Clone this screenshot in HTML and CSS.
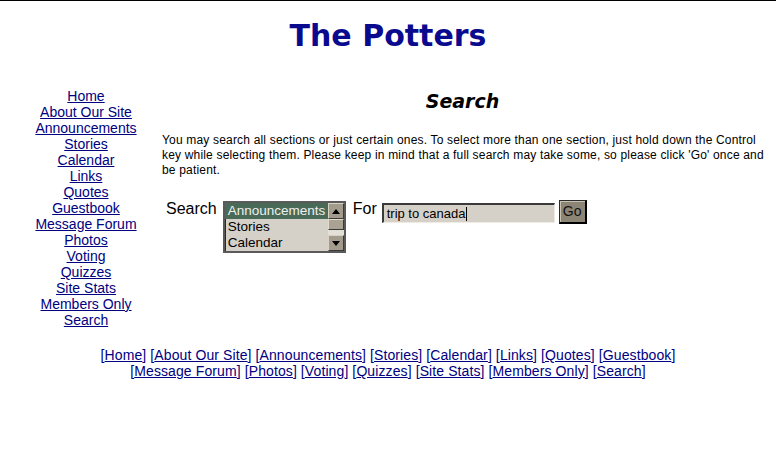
FILE: index.html
```html
<!DOCTYPE html>
<html>
<head>
<meta charset="utf-8">
<title>The Potters - Search</title>
<link rel="stylesheet" href="styles.css">
</head>
<body>
<div class="page">
  <h1 class="site-title">The Potters</h1>
  <div class="layout">
    <nav class="side-nav">
      <a href="#">Home</a>
      <a href="#">About Our Site</a>
      <a href="#">Announcements</a>
      <a href="#">Stories</a>
      <a href="#">Calendar</a>
      <a href="#">Links</a>
      <a href="#">Quotes</a>
      <a href="#">Guestbook</a>
      <a href="#">Message Forum</a>
      <a href="#">Photos</a>
      <a href="#">Voting</a>
      <a href="#">Quizzes</a>
      <a href="#">Site Stats</a>
      <a href="#">Members Only</a>
      <a href="#">Search</a>
    </nav>
    <main class="content">
      <h2 class="page-heading">Search</h2>
      <p class="intro">You may search all sections or just certain ones. To select more than one section, just hold down the Control key while selecting them. Please keep in mind that a full search may take some, so please click 'Go' once and be patient.</p>
      <form class="search-row">
        <span class="label">Search</span>
        <div class="listbox">
          <div class="options">
            <div class="option selected">Announcements</div>
            <div class="option">Stories</div>
            <div class="option">Calendar</div>
          </div>
          <div class="scrollbar">
            <div class="sb-btn"><svg width="8" height="5" viewBox="0 0 8 5"><polygon points="4,0 8,5 0,5" fill="#000"/></svg></div>
            <div class="sb-track"><div class="sb-thumb"></div></div>
            <div class="sb-btn"><svg width="8" height="5" viewBox="0 0 8 5"><polygon points="0,0 8,0 4,5" fill="#000"/></svg></div>
          </div>
        </div>
        <span class="label">For</span>
        <div class="textbox"><span>trip to canada</span><span class="caret"></span></div>
        <div class="go-btn">Go</div>
      </form>
    </main>
  </div>
  <footer class="foot-nav">
    <div class="foot-line">[<a href="#">Home</a>] [<a href="#">About Our Site</a>] [<a href="#">Announcements</a>] [<a href="#">Stories</a>] [<a href="#">Calendar</a>] [<a href="#">Links</a>] [<a href="#">Quotes</a>] [<a href="#">Guestbook</a>]</div>
    <div class="foot-line">[<a href="#">Message Forum</a>] [<a href="#">Photos</a>] [<a href="#">Voting</a>] [<a href="#">Quizzes</a>] [<a href="#">Site Stats</a>] [<a href="#">Members Only</a>] [<a href="#">Search</a>]</div>
  </footer>
</div>
</body>
</html>
```

FILE: styles.css
```css
html, body {
  margin: 0;
  padding: 0;
  background: #ffffff;
}

.page {
  border-top: 1px solid #000;
  min-height: 456px;
  font-family: "Liberation Sans", Arial, sans-serif;
  color: #000;
}

.site-title {
  margin: 17px 0 0;
  text-align: center;
  font-family: "DejaVu Sans", Verdana, sans-serif;
  font-weight: bold;
  font-size: 30px;
  line-height: 36px;
  color: #0a0a8f;
}

.layout {
  display: flex;
  margin-top: 34px;
  padding-left: 10px;
}

.side-nav {
  width: 152px;
  display: flex;
  flex-direction: column;
  align-items: center;
  font-size: 14px;
  line-height: 16px;
}

.side-nav a,
.foot-nav a {
  color: #000080;
  text-decoration: underline;
}

.content {
  width: 601px;
}

.page-heading {
  margin: 0;
  text-align: center;
  font-family: "DejaVu Sans", Verdana, sans-serif;
  font-style: italic;
  font-weight: bold;
  font-size: 19px;
  line-height: 26px;
}

.intro {
  margin: 19px -10px 0 0;
  font-size: 12px;
  line-height: 15px;
  letter-spacing: 0.18px;
}

.search-row {
  display: flex;
  align-items: flex-start;
  margin: 22px 0 0;
  padding-left: 4px;
}

.label {
  font-size: 16px;
  line-height: 18px;
}

.listbox {
  display: flex;
  width: 119px;
  height: 48px;
  margin: 1px 0 0 6px;
  border: 2px solid #5a5a5a;
  box-shadow: inset 1px 1px 0 #2a2a2a;
  background: #d6d1c8;
}

.options {
  flex: 1;
  font-size: 13.5px;
  line-height: 16px;
}

.option {
  height: 16px;
  padding-left: 3px;
  white-space: nowrap;
}

.option.selected {
  background: #4a6a58;
  color: #eef0ee;
}

.scrollbar {
  width: 16px;
  display: flex;
  flex-direction: column;
}

.sb-btn {
  height: 16px;
  box-sizing: border-box;
  background: #a39b8c;
  border-top: 1px solid #d8d2c6;
  border-left: 1px solid #d8d2c6;
  border-right: 1px solid #3a3a3a;
  border-bottom: 1px solid #3a3a3a;
  display: flex;
  align-items: center;
  justify-content: center;
}

.sb-track {
  flex: 1;
  background: #e4e0d8;
}

.sb-thumb {
  height: 11px;
  box-sizing: border-box;
  background: #aaa292;
  border-top: 1px solid #e0dacf;
  border-left: 1px solid #e0dacf;
  border-right: 1px solid #3a3a3a;
  border-bottom: 1px solid #3a3a3a;
}

.listbox + .label {
  margin-left: 7px;
}

.textbox {
  display: flex;
  align-items: center;
  box-sizing: border-box;
  width: 173px;
  height: 20px;
  margin: 3px 0 0 5px;
  padding: 0 2px 0 3px;
  background: #d6d1c8;
  border-top: 2px solid #3a3a3a;
  border-left: 2px solid #3a3a3a;
  border-right: 1px solid #f0ece4;
  border-bottom: 1px solid #f0ece4;
  font-size: 13px;
  line-height: 16px;
}

.caret {
  display: inline-block;
  width: 1px;
  height: 14px;
  background: #000;
  margin-left: 1px;
}

.go-btn {
  box-sizing: border-box;
  width: 28px;
  height: 24px;
  margin-left: 4px;
  background: #8c8474;
  border-top: 1px solid #2a2a2a;
  border-left: 1px solid #2a2a2a;
  border-right: 2px solid #000;
  border-bottom: 2px solid #000;
  box-shadow: inset 1px 1px 0 #c8c2b4;
  font-size: 14px;
  line-height: 20px;
  text-align: center;
  color: #111;
}

.foot-nav {
  margin-top: 19px;
  text-align: center;
  font-size: 14px;
  line-height: 16px;
  color: #000080;
  letter-spacing: 0.1px;
}
```
